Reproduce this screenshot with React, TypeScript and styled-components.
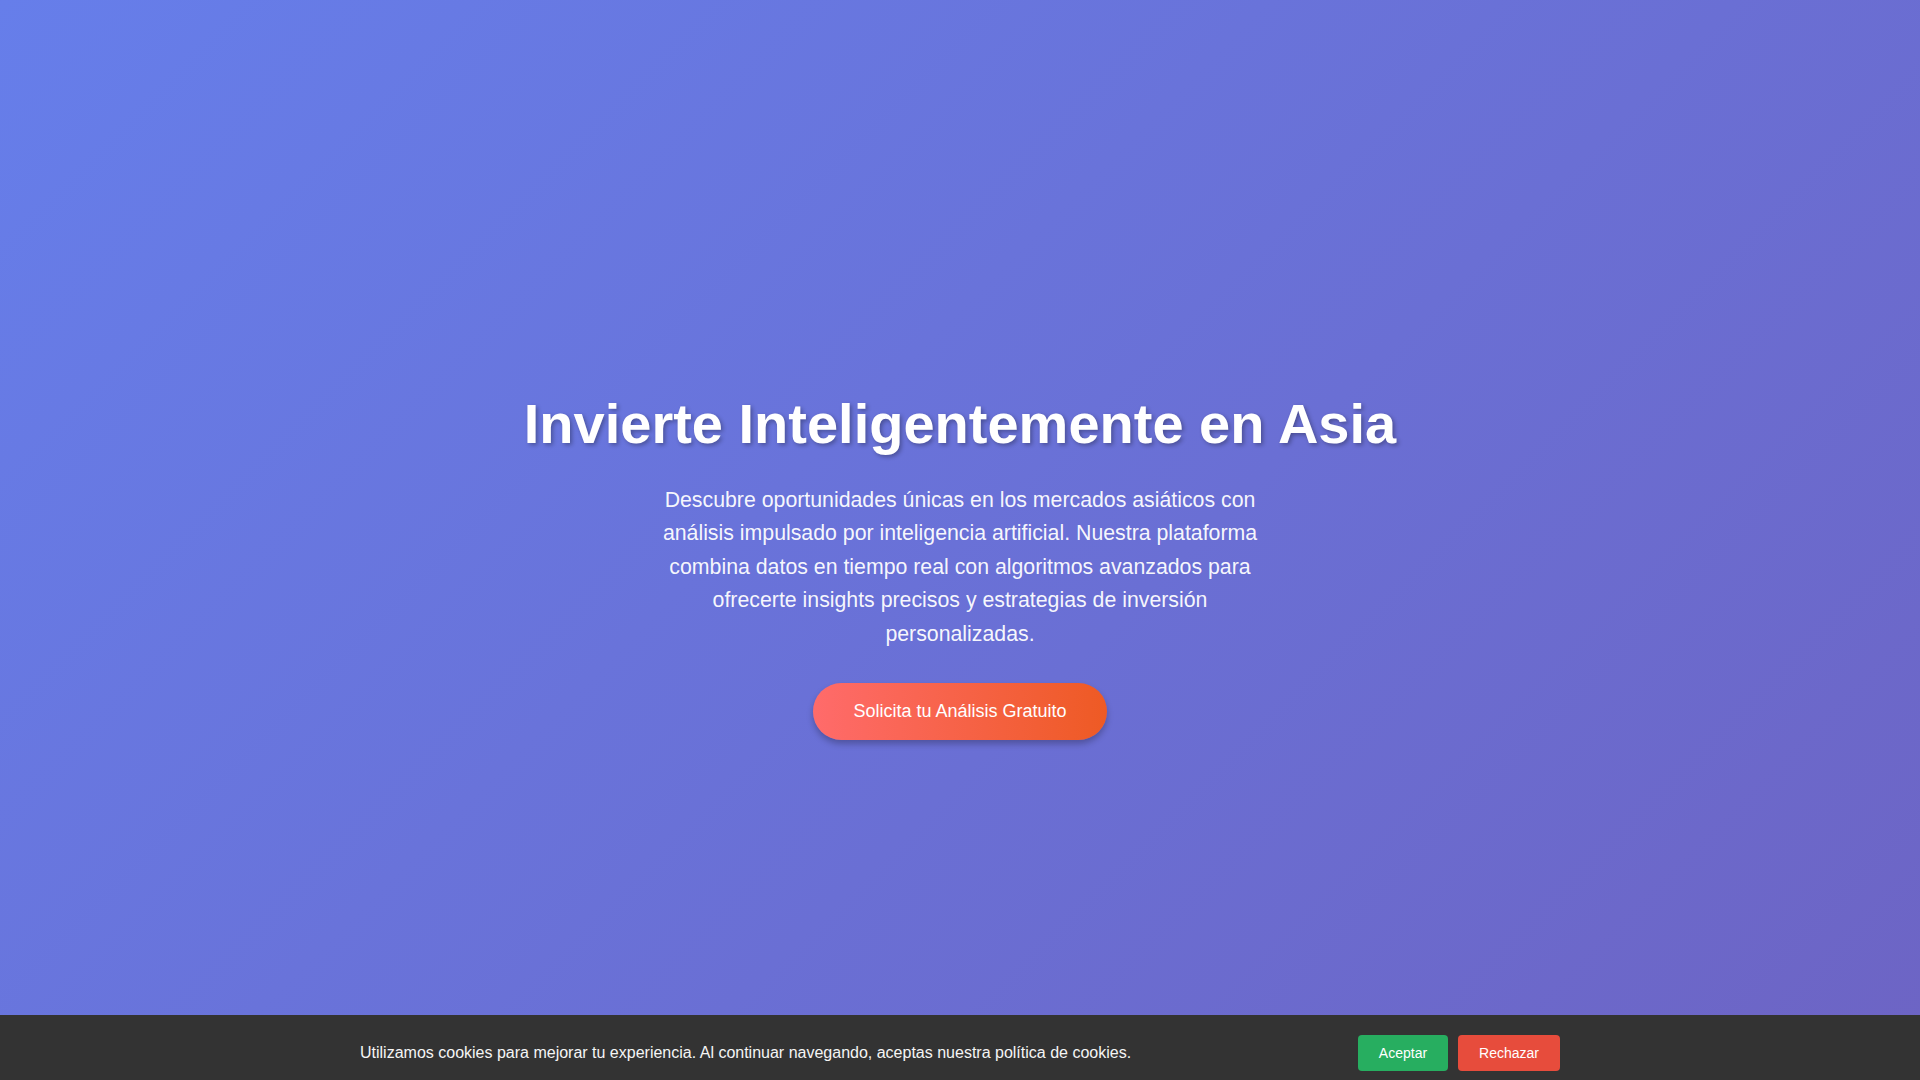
import styled, { createGlobalStyle } from "styled-components";

const GlobalStyle = createGlobalStyle`
  * {
    box-sizing: border-box;
  }
  html::-webkit-scrollbar {
    width: 10px;
  }
  html::-webkit-scrollbar-track {
    background: #f1f1f1;
  }
  html::-webkit-scrollbar-thumb {
    background: #111;
    border: 2px solid #f1f1f1;
    border-radius: 6px;
  }
  body {
    margin: 0;
    font-family: "Liberation Sans", Arial, sans-serif;
    color: #333;
    background: #f8f9fa;
  }
`;

const Page = styled.div``;

const Hero = styled.section`
  height: 100vh;
  display: flex;
  flex-direction: column;
  align-items: center;
  justify-content: center;
  padding-top: 50px;
  text-align: center;
  color: #fff;
  background: linear-gradient(135deg, #667eea 0%, #6d64c4 100%);
`;

const Title = styled.h1`
  margin: 0 0 27px;
  font-size: 3.5rem;
  line-height: 1.2;
  font-weight: 700;
  text-shadow: 2px 2px 4px rgba(0, 0, 0, 0.3);
`;

const Lead = styled.p`
  max-width: 600px;
  margin: 0 0 32px;
  font-size: 21.3px;
  line-height: 33.4px;
  color: rgba(255, 255, 255, 0.96);
`;

const CtaButton = styled.button`
  padding: 18px 40px;
  border: none;
  border-radius: 50px;
  font-family: "Liberation Sans", Arial, sans-serif;
  font-size: 18px;
  color: #fff;
  cursor: pointer;
  background: linear-gradient(90deg, #ff6b6b 0%, #ee5a24 100%);
  box-shadow: 0 4px 6px rgba(0, 0, 0, 0.25);
`;

const Section = styled.section<{ $tall: number }>`
  min-height: ${(p) => p.$tall}px;
  padding: 80px 20px;
  background: ${(p) => (p.$tall > 700 ? "#fff" : "#f8f9fa")};
`;

const SectionInner = styled.div`
  max-width: 1200px;
  margin: 0 auto;
`;

const SectionTitle = styled.h2`
  margin: 0 0 40px;
  font-size: 2.5rem;
  text-align: center;
  color: #333;
`;

const CardGrid = styled.div`
  display: grid;
  grid-template-columns: repeat(3, 1fr);
  gap: 30px;
`;

const Card = styled.div`
  padding: 40px 30px;
  border-radius: 12px;
  background: #fff;
  box-shadow: 0 5px 20px rgba(0, 0, 0, 0.08);
`;

const CardTitle = styled.h3`
  margin: 0 0 12px;
  font-size: 1.4rem;
  color: #667eea;
`;

const CardText = styled.p`
  margin: 0;
  line-height: 1.6;
  color: #666;
`;

const Footer = styled.footer`
  padding: 40px 20px 100px;
  background: #2c3e50;
  color: #ccc;
  text-align: center;
`;

const CookieBar = styled.div`
  position: fixed;
  left: 0;
  right: 0;
  bottom: 0;
  padding: 20px 20px 9px;
  background: #333;
  color: #f5f5f5;
  z-index: 10;
`;

const CookieInner = styled.div`
  max-width: 1200px;
  margin: 0 auto;
  display: flex;
  align-items: center;
  justify-content: space-between;
`;

const CookieText = styled.p`
  margin: 0;
  font-size: 16px;
`;

const CookieActions = styled.div`
  display: flex;
  gap: 10px;
`;

const CookieButton = styled.button<{ $kind: "accept" | "reject" }>`
  height: 36px;
  padding: 0 21px;
  border: none;
  border-radius: 4px;
  font-size: 14px;
  color: #fff;
  cursor: pointer;
  background: ${(p) => (p.$kind === "accept" ? "#27ae60" : "#e74c3c")};
`;

const features = [
  {
    title: "Análisis con IA",
    text: "Modelos predictivos que evalúan miles de señales del mercado asiático cada segundo.",
  },
  {
    title: "Datos en Tiempo Real",
    text: "Cotizaciones y noticias de Tokio, Shanghái, Hong Kong, Seúl y Singapur al instante.",
  },
  {
    title: "Estrategias Personalizadas",
    text: "Carteras adaptadas a tu perfil de riesgo y a tus objetivos financieros.",
  },
];

const App: React.FC = () => {
  return (
    <Page>
      <GlobalStyle />
      <Hero>
        <Title>Invierte Inteligentemente en Asia</Title>
        <Lead>
          Descubre oportunidades únicas en los mercados asiáticos con análisis
          impulsado por inteligencia artificial. Nuestra plataforma combina
          datos en tiempo real con algoritmos avanzados para ofrecerte insights
          precisos y estrategias de inversión personalizadas.
        </Lead>
        <CtaButton>Solicita tu Análisis Gratuito</CtaButton>
      </Hero>

      <Section $tall={800}>
        <SectionInner>
          <SectionTitle>¿Por qué elegirnos?</SectionTitle>
          <CardGrid>
            {features.map((f) => (
              <Card key={f.title}>
                <CardTitle>{f.title}</CardTitle>
                <CardText>{f.text}</CardText>
              </Card>
            ))}
          </CardGrid>
        </SectionInner>
      </Section>

      <Section $tall={700}>
        <SectionInner>
          <SectionTitle>Mercados que Cubrimos</SectionTitle>
          <CardGrid>
            {["Japón", "China", "Corea del Sur"].map((m) => (
              <Card key={m}>
                <CardTitle>{m}</CardTitle>
                <CardText>Seguimiento diario de índices, sectores y empresas líderes.</CardText>
              </Card>
            ))}
          </CardGrid>
        </SectionInner>
      </Section>

      <Section $tall={560}>
        <SectionInner>
          <SectionTitle>Contacto</SectionTitle>
          <CardText>Escríbenos y un asesor te responderá en menos de 24 horas.</CardText>
        </SectionInner>
      </Section>

      <Footer>© 2024 Asia Invest AI. Todos los derechos reservados.</Footer>

      <CookieBar>
        <CookieInner>
          <CookieText>
            Utilizamos cookies para mejorar tu experiencia. Al continuar
            navegando, aceptas nuestra política de cookies.
          </CookieText>
          <CookieActions>
            <CookieButton $kind="accept">Aceptar</CookieButton>
            <CookieButton $kind="reject">Rechazar</CookieButton>
          </CookieActions>
        </CookieInner>
      </CookieBar>
    </Page>
  );
};

export default App;
